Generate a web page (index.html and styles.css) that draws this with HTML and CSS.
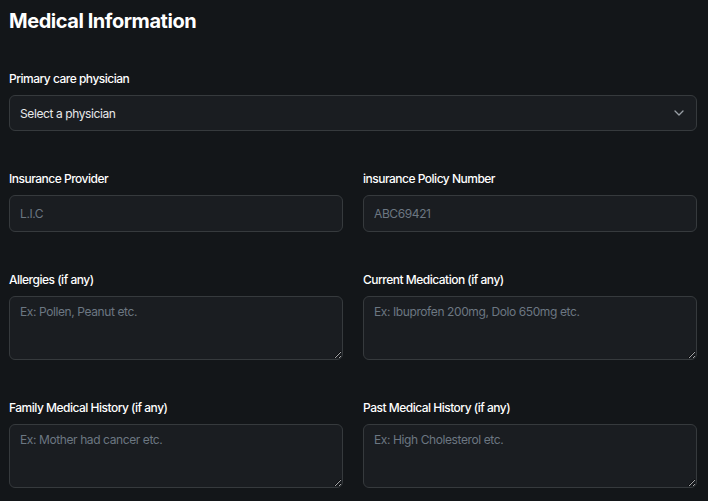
FILE: index.html
```html
<!DOCTYPE html>
<html lang="en">
<head>
<meta charset="utf-8">
<title>Medical Information</title>
<link rel="stylesheet" href="styles.css">
</head>
<body>
<main class="page">
  <h1 class="title">Medical Information</h1>

  <div class="field">
    <label class="label">Primary care physician</label>
    <div class="select">
      <span class="select-text">Select a physician</span>
      <svg class="chevron" width="10" height="6" viewBox="0 0 10 6" fill="none"><path d="M1 1l4 4 4-4" stroke="#9aa0a6" stroke-width="1.3" stroke-linecap="round" stroke-linejoin="round"/></svg>
    </div>
  </div>

  <div class="row">
    <div class="field">
      <label class="label">Insurance Provider</label>
      <input class="input" placeholder="L.I.C">
    </div>
    <div class="field">
      <label class="label">insurance Policy Number</label>
      <input class="input" placeholder="ABC69421">
    </div>
  </div>

  <div class="row">
    <div class="field">
      <label class="label">Allergies (if any)</label>
      <textarea class="textarea" placeholder="Ex: Pollen, Peanut etc."></textarea>
    </div>
    <div class="field">
      <label class="label">Current Medication (if any)</label>
      <textarea class="textarea" placeholder="Ex: Ibuprofen 200mg, Dolo 650mg etc."></textarea>
    </div>
  </div>

  <div class="row">
    <div class="field">
      <label class="label">Family Medical History (if any)</label>
      <textarea class="textarea" placeholder="Ex: Mother had cancer etc."></textarea>
    </div>
    <div class="field">
      <label class="label">Past Medical History (if any)</label>
      <textarea class="textarea" placeholder="Ex: High Cholesterol etc."></textarea>
    </div>
  </div>
</main>
</body>
</html>
```
FILE: styles.css
```css
* { box-sizing: border-box; }
html, body {
  margin: 0;
  background: #131619;
  color-scheme: dark;
}
body {
  font-family: Inter, "Noto Sans", sans-serif;
  color: #ffffff;
}
.page {
  padding: 5px 11px 0 9px;
  display: flex;
  flex-direction: column;
  gap: 40px;
}
.title {
  margin: 0 0 -6px;
  font-size: 20px;
  line-height: 32px;
  font-weight: 700;
  letter-spacing: -0.45px;
}
.row {
  display: grid;
  grid-template-columns: 1fr 1fr;
  column-gap: 20px;
}
.field {
  display: flex;
  flex-direction: column;
  gap: 8px;
}
.label {
  font-size: 12px;
  line-height: 16px;
  font-weight: 500;
  color: #ffffff;
  letter-spacing: -0.5px;
}
.select, .input, .textarea {
  width: 100%;
  background: #1a1d21;
  border: 1px solid #363a3d;
  border-radius: 6px;
  font-family: inherit;
  font-size: 12px;
  letter-spacing: -0.4px;
  outline: none;
}
.select {
  height: 36px;
  display: flex;
  align-items: center;
  justify-content: space-between;
  padding: 0 12px 0 10px;
}
.select-text { color: #e8e9ea; }
.input {
  height: 37px;
  padding: 0 10px;
  color: #e8e9ea;
}
.textarea {
  height: 64px;
  padding: 7px 10px;
  color: #e8e9ea;
  resize: vertical;
  display: block;
}
.input::placeholder, .textarea::placeholder { color: #6c7782; }
```
